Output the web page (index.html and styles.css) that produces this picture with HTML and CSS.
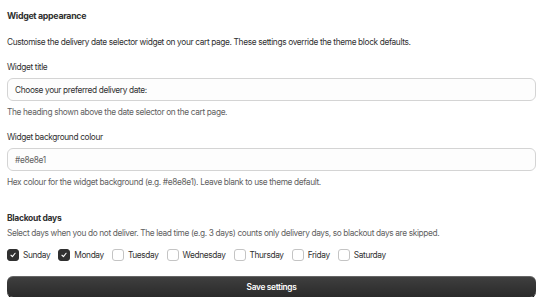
FILE: index.html
```html
<!DOCTYPE html>
<html>
<head>
<meta charset="utf-8">
<link rel="stylesheet" href="styles.css">
</head>
<body>
<div class="page">
  <h2 class="title">Widget appearance</h2>
  <p class="desc">Customise the delivery date selector widget on your cart page. These settings override the theme block defaults.</p>

  <div class="field">
    <label class="label">Widget title</label>
    <div class="input">Choose your preferred delivery date:</div>
    <p class="help">The heading shown above the date selector on the cart page.</p>
  </div>

  <div class="field">
    <label class="label">Widget background colour</label>
    <div class="input placeholder">#e8e8e1</div>
    <p class="help">Hex colour for the widget background (e.g. #e8e8e1). Leave blank to use theme default.</p>
  </div>

  <div class="blackout">
    <h3 class="subtitle">Blackout days</h3>
    <p class="help">Select days when you do not deliver. The lead time (e.g. 3 days) counts only delivery days, so blackout days are skipped.</p>
    <div class="days">
      <span class="day"><span class="box checked"><svg viewBox="0 0 12 12" width="12" height="12"><path d="M3.6 6.3 L5.3 8 L8.5 3.9" fill="none" stroke="#fff" stroke-width="1.3" stroke-linecap="round" stroke-linejoin="round"/></svg></span>Sunday</span>
      <span class="day"><span class="box checked"><svg viewBox="0 0 12 12" width="12" height="12"><path d="M3.6 6.3 L5.3 8 L8.5 3.9" fill="none" stroke="#fff" stroke-width="1.3" stroke-linecap="round" stroke-linejoin="round"/></svg></span>Monday</span>
      <span class="day"><span class="box"></span>Tuesday</span>
      <span class="day"><span class="box"></span>Wednesday</span>
      <span class="day"><span class="box"></span>Thursday</span>
      <span class="day"><span class="box"></span>Friday</span>
      <span class="day"><span class="box"></span>Saturday</span>
    </div>
  </div>

  <button class="save">Save settings</button>
</div>
</body>
</html>
```

FILE: styles.css
```css
* { box-sizing: border-box; }
html, body { margin: 0; padding: 0; background: #fff; }
body {
  font-family: "Inter", "Liberation Sans", sans-serif;
  color: #303030;
  font-size: 8.3px;
  letter-spacing: -0.35px;
}
.page {
  padding: 6px 6px 0 7px;
  display: flex;
  flex-direction: column;
}
.title {
  margin: 4px 0 0;
  font-size: 8.8px;
  font-weight: 700;
  letter-spacing: -0.3px;
  line-height: 12px;
}
.desc {
  margin: 14px 0 0;
  line-height: 12px;
  color: #303030;
}
.field { margin-top: 13px; display: flex; flex-direction: column; }
.label { line-height: 12px; display: block; }
.input {
  margin-top: 5px;
  height: 23px;
  border: 1px solid #d4d4d4;
  border-radius: 6px;
  background: #fdfdfd;
  padding: 0 7px;
  display: flex;
  align-items: center;
  color: #303030;
}
.input.placeholder { color: #616161; }
.help {
  margin: 5px 0 0;
  line-height: 12px;
  color: #616161;
}
.blackout { margin-top: 24px; }
.subtitle { margin: 0; font-size: 8.5px; font-weight: 700; letter-spacing: -0.3px; line-height: 12px; }
.blackout .help { margin-top: 3px; }
.days {
  margin-top: 10px;
  display: flex;
  gap: 8px;
  align-items: center;
}
.day { display: flex; align-items: center; gap: 4px; line-height: 12px; color: #303030; }
.box {
  width: 12px; height: 12px;
  border: 1px solid #c4c4c4;
  border-radius: 3px;
  background: #fff;
  display: flex; align-items: center; justify-content: center;
}
.box.checked { background: #303030; border-color: #303030; }
.box svg { display: block; }
.save {
  margin-top: 15px;
  height: 21px;
  border: none;
  border-radius: 6px;
  background: linear-gradient(#404040, #2a2a2a);
  box-shadow: inset 0 1px 0 rgba(255,255,255,0.2), 0 1px 0 #000;
  color: #fff;
  font-family: inherit;
  font-size: 8.3px;
  letter-spacing: -0.3px;
  font-weight: 600;
  width: 529px;
}
```
